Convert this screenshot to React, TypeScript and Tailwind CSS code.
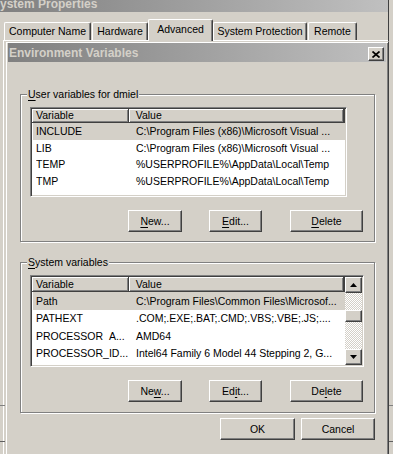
import React from "react";

const userRows: [string, string][] = [
  ["INCLUDE", "C:\\Program Files (x86)\\Microsoft Visual ..."],
  ["LIB", "C:\\Program Files (x86)\\Microsoft Visual ..."],
  ["TEMP", "%USERPROFILE%\\AppData\\Local\\Temp"],
  ["TMP", "%USERPROFILE%\\AppData\\Local\\Temp"],
];

const sysRows: [string, string][] = [
  ["Path", "C:\\Program Files\\Common Files\\Microsof..."],
  ["PATHEXT", ".COM;.EXE;.BAT;.CMD;.VBS;.VBE;.JS;...."],
  ["PROCESSOR_A...", "AMD64"],
  ["PROCESSOR_ID...", "Intel64 Family 6 Model 44 Stepping 2, G..."],
];

const raised =
  "bg-[#d4d0c8] border border-t-white border-l-white border-r-[#404040] border-b-[#404040] shadow-[inset_-1px_-1px_0_#808080]";

function Btn({ className, children }: { className: string; children: React.ReactNode }) {
  return (
    <div className={`${raised} h-[22px] flex items-center justify-center leading-none ${className}`}>
      <span>{children}</span>
    </div>
  );
}

function U({ children }: { children: React.ReactNode }) {
  return <span className="underline decoration-1 underline-offset-[2px]">{children}</span>;
}

const hdr =
  "bg-[#d4d0c8] border-r border-b border-[#404040] shadow-[inset_1px_1px_0_#fff,inset_-1px_-1px_0_#808080] flex items-center leading-none whitespace-nowrap overflow-hidden";

function Header({ h }: { h: string }) {
  return (
    <div className={`flex shrink-0 ${h}`}>
      <div className={`w-[97px] pl-[4px] ${hdr}`}>Variable</div>
      <div className={`w-[216px] pl-[7px] ${hdr}`}>Value</div>
      <div className={`flex-1 ${hdr}`} />
    </div>
  );
}

function Rows({ rows, h }: { rows: [string, string][]; h: string }) {
  return (
    <div className="flex flex-col">
      {rows.map(([k, v], i) => (
        <div
          key={k}
          className={`flex items-center ml-[1px] pl-[3px] whitespace-nowrap leading-none ${h} ${
            i === 0 ? "bg-[#d4d0c8]" : ""
          }`}
        >
          <span className="w-[97px] shrink-0 overflow-hidden">{k}</span>
          <span className="pl-[3px]">{v}</span>
        </div>
      ))}
    </div>
  );
}

const sunken =
  "bg-white border border-t-[#808080] border-l-[#808080] border-r-white border-b-white shadow-[inset_1px_1px_0_#404040,inset_-1px_-1px_0_#d4d0c8] p-[1px]";

function Arrow({ up }: { up: boolean }) {
  return (
    <svg width="7" height="4" viewBox="0 0 7 4">
      <polygon points={up ? "3.5,0 7,4 0,4" : "0,0 7,0 3.5,4"} fill="#000" />
    </svg>
  );
}

function Scrollbar() {
  return (
    <div className="w-[17px] shrink-0 flex flex-col bg-[repeating-conic-gradient(#d4d0c8_0_25%,#ffffff_0_50%)] bg-[length:2px_2px]">
      <div className={`${raised} h-[16px] flex items-center justify-center`}>
        <Arrow up />
      </div>
      <div className={`${raised} h-[12px] mt-[17px]`} />
      <div className="flex-1" />
      <div className={`${raised} h-[16px] flex items-center justify-center`}>
        <Arrow up={false} />
      </div>
    </div>
  );
}

function Tab({ className, children, selected }: { className: string; children: React.ReactNode; selected?: boolean }) {
  return (
    <div
      className={`${className} flex items-center justify-center whitespace-nowrap leading-none bg-[#d4d0c8] border-t border-l border-white border-r border-r-[#404040] shadow-[inset_-1px_0_0_#808080] rounded-t-[2px] ${
        selected ? "h-[22px] -mb-[1px] relative z-10 pb-[2px]" : "h-[18px]"
      }`}
    >
      {children}
    </div>
  );
}

export default function App() {
  return (
    <div className="relative w-[393px] h-[454px] overflow-hidden bg-[#d4d0c8] text-black text-[10.5px] font-['Liberation_Sans',Arial,sans-serif]">
      <div className="w-[389px] h-full border-r border-[#404040]">
        {/* System Properties title bar */}
        <div className="h-[12px] bg-linear-to-r from-[#808080] to-[#c0c0c0] overflow-hidden">
          <div className="-ml-[8px] -mt-[3px] text-[12px] font-bold leading-[14px] text-[#d4d0c8] whitespace-nowrap">
            System Properties
          </div>
        </div>

        {/* Tabs */}
        <div className="mt-[7px] h-[21px] flex items-end pl-[4px]">
          <Tab className="w-[87px]">Computer Name</Tab>
          <div className="w-[1px]" />
          <Tab className="w-[56px]">Hardware</Tab>
          <Tab className="w-[65px]" selected>
            Advanced
          </Tab>
          <Tab className="w-[94px]">System Protection</Tab>
          <div className="w-[1px]" />
          <Tab className="w-[49px]">Remote</Tab>
        </div>

        {/* Tab panel */}
        <div className="ml-[3px] h-[420px] border-t border-l border-white" />
      </div>

      {/* underlying window fragments */}
      <div className="absolute left-0 top-[441px] w-[5px] h-px bg-[#606060]" />
      <div className="absolute right-0 top-[441px] w-[5px] h-px bg-[#606060]" />
      <div className="absolute left-0 top-[405px] w-[5px] h-px bg-[#808080]" />
      <div className="absolute right-0 top-[405px] w-[5px] h-px bg-[#808080]" />

      {/* Environment Variables dialog */}
      <div className="absolute left-[5px] top-[41px] w-[384px] h-[430px] bg-[#d4d0c8] border border-t-[#d4d0c8] border-l-[#d4d0c8] border-r-[#404040] border-b-[#404040] shadow-[inset_1px_1px_0_#fff,inset_-1px_-1px_0_#808080] pl-[2px] pr-[2px] pt-[1px] flex flex-col">
        <div className="h-[19px] shrink-0 bg-linear-to-r from-[#808080] to-[#c0c0c0] flex items-start justify-between pl-[1px] pr-[2px]">
          <span className="pt-[1px] text-[12px] font-bold leading-[19px] text-[#d4d0c8] whitespace-nowrap">
            Environment Variables
          </span>
          <div className={`${raised} mt-[4px] w-[16px] h-[14px] flex items-center justify-center`}>
            <svg width="8" height="7" viewBox="0 0 8 7">
              <path d="M0.5 0.5 L7.5 6.5 M7.5 0.5 L0.5 6.5" stroke="#000" strokeWidth="1.7" />
            </svg>
          </div>
        </div>

        {/* User variables group */}
        <div className="relative mt-[32px] ml-[12px] w-[355px] h-[148px] shrink-0 border border-[#808080] shadow-[1px_1px_0_#fff,inset_1px_1px_0_#fff] pt-[12px] pl-[9px]">
          <span className="absolute left-[6px] top-[-8px] px-[1px] bg-[#d4d0c8] leading-[14px] whitespace-nowrap">
            <U>U</U>ser variables for dmiel
          </span>
          <div className={`${sunken} w-[317px] h-[90px] flex flex-col overflow-hidden`}>
            <Header h="h-[14px]" />
            <Rows rows={userRows} h="h-[16.7px]" />
          </div>
          <div className="flex mt-[13px]">
            <Btn className="ml-[98px] w-[54px]">
              <U>N</U>ew...
            </Btn>
            <Btn className="ml-[27px] w-[53px]">
              <U>E</U>dit...
            </Btn>
            <Btn className="ml-[28px] w-[73px]">
              <U>D</U>elete
            </Btn>
          </div>
        </div>

        {/* System variables group */}
        <div className="relative mt-[20px] ml-[12px] w-[355px] h-[151px] shrink-0 border border-[#808080] shadow-[1px_1px_0_#fff,inset_1px_1px_0_#fff] pt-[12px] pl-[9px]">
          <span className="absolute left-[6px] top-[-8px] px-[1px] bg-[#d4d0c8] leading-[14px] whitespace-nowrap">
            <U>S</U>ystem variables
          </span>
          <div className={`${sunken} w-[334px] h-[92px] flex overflow-hidden`}>
            <div className="flex-1 flex flex-col min-w-0">
              <Header h="h-[15px]" />
              <Rows rows={sysRows} h="h-[17.5px]" />
            </div>
            <Scrollbar />
          </div>
          <div className="flex mt-[13px]">
            <Btn className="ml-[98px] w-[54px]">
              Ne<U>w</U>...
            </Btn>
            <Btn className="ml-[27px] w-[53px]">
              Ed<U>i</U>t...
            </Btn>
            <Btn className="ml-[28px] w-[73px]">
              De<U>l</U>ete
            </Btn>
          </div>
        </div>

        {/* OK / Cancel */}
        <div className="flex mt-[5px]">
          <Btn className="ml-[212px] w-[75px]">OK</Btn>
          <Btn className="ml-[6px] w-[74px]">Cancel</Btn>
        </div>
      </div>
    </div>
  );
}
